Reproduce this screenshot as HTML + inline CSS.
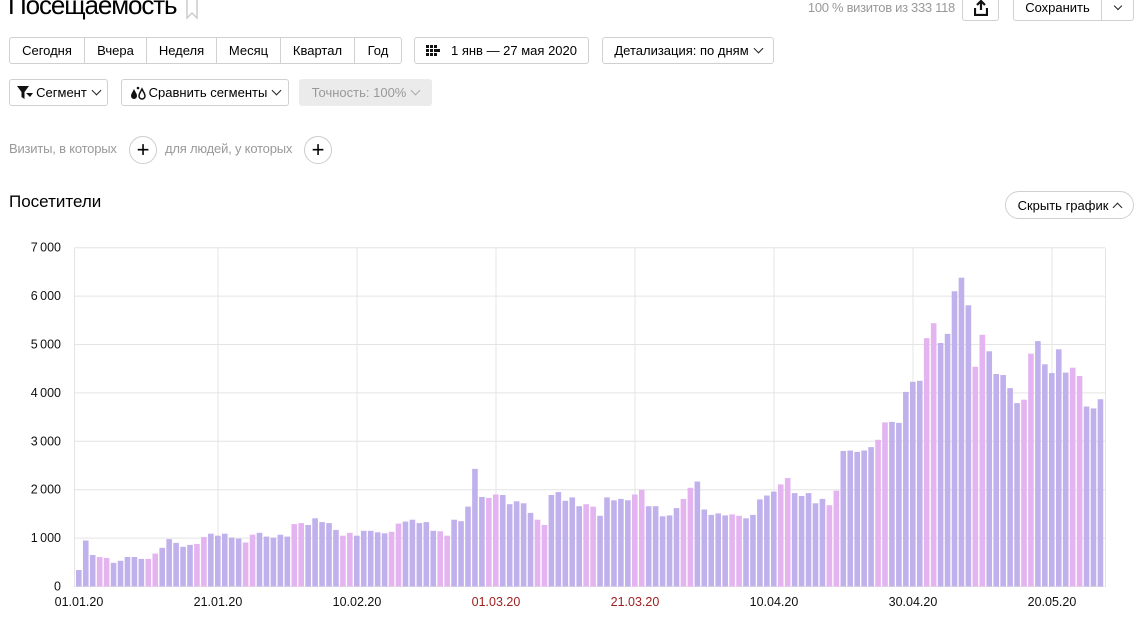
<!DOCTYPE html>
<html><head><meta charset="utf-8">
<style>
*{box-sizing:border-box;margin:0;padding:0}
body{width:1142px;height:619px;overflow:hidden;background:#fff;font-family:"Liberation Sans",Arial,sans-serif;color:#000;position:relative}
.a{position:absolute}
.btn{position:absolute;border:1px solid #d0d0d0;border-radius:3px;background:#fff;font-size:13px;display:flex;align-items:center;justify-content:center;height:27px;white-space:nowrap}
.grp{position:absolute;left:9px;top:37px;height:27px;display:flex;border:1px solid #d0d0d0;border-radius:3px}
.grp div{font-size:13px;display:flex;align-items:center;justify-content:center;border-right:1px solid #d0d0d0;height:100%}
.grp div:last-child{border-right:none}
.chev{display:inline-block;width:7px;height:7px;border-right:1.5px solid #222;border-bottom:1.5px solid #222;transform:rotate(45deg);margin-left:6px;margin-top:-4px}
.plus{position:absolute;width:28px;height:28px;border:1px solid #ccc;border-radius:50%;font-size:22px;line-height:25px;text-align:center}
</style></head><body>
<div class="a" style="left:8px;top:-10px;font-size:26px;letter-spacing:-1.1px">Посещаемость</div>
<svg class="a" style="left:186px;top:0" width="12" height="20"><path d="M1 0V18L6 13L11 18V0" fill="none" stroke="#ccc" stroke-width="1.5"/></svg>
<div class="a" style="right:187px;top:0;font-size:13px;color:#999;letter-spacing:-0.3px">100 % визитов из 333 118</div>
<div class="btn" style="left:962px;top:-6px;width:37px;height:27px"><svg width="14" height="16"><path d="M7 1V10M3 5L7 1L11 5M1 8V15H13V8" fill="none" stroke="#111" stroke-width="2.2"/></svg></div>
<div class="btn" style="left:1013px;top:-6px;width:89px;height:27px;border-radius:3px 0 0 3px">Сохранить</div>
<div class="btn" style="left:1101px;top:-6px;width:33px;height:27px;border-radius:0 3px 3px 0"><span class="chev" style="margin-left:0;width:6px;height:6px"></span></div>

<div class="grp">
<div style="width:75px">Сегодня</div><div style="width:62px">Вчера</div><div style="width:70px">Неделя</div><div style="width:64px">Месяц</div><div style="width:74px">Квартал</div><div style="width:46px">Год</div>
</div>
<div class="btn" style="left:414px;top:37px;width:175px"><svg width="14" height="11" style="margin-right:11px"><g fill="#111"><rect x="0" y="0" width="3" height="3"/><rect x="4" y="0" width="3" height="3"/><rect x="8" y="0" width="3" height="3"/><rect x="0" y="4" width="3" height="3"/><rect x="4" y="4" width="3" height="3"/><rect x="8" y="4" width="3" height="3"/><rect x="11" y="4" width="3" height="3"/><rect x="0" y="8" width="3" height="3"/><rect x="4" y="8" width="3" height="3"/><rect x="8" y="8" width="3" height="3"/></g></svg>1 янв — 27 мая 2020</div>
<div class="btn" style="left:602px;top:37px;width:172px">Детализация: по дням<span class="chev"></span></div>

<div class="btn" style="left:9px;top:79px;width:99px"><svg width="16" height="13" style="margin-right:3px"><path d="M0 0H12L7.5 6V13L4.5 11V6Z M9 7H16L13 11Z" fill="#111"/></svg>Сегмент<span class="chev"></span></div>
<div class="btn" style="left:121px;top:79px;width:168px"><svg width="16" height="14" style="margin-right:3px"><path d="M4 3C2 7 1 8 1 10A3 3 0 0 0 7 10C7 8 6 7 4 3Z" fill="#111"/><path d="M12 3C10 7 9 8 9 10A3 3 0 0 0 15 10C15 8 14 7 12 3Z" fill="none" stroke="#111" stroke-width="1.5"/><circle cx="8" cy="2" r="1.3" fill="#111"/></svg>Сравнить сегменты<span class="chev"></span></div>
<div class="btn" style="left:299px;top:79px;width:133px;background:#ebebeb;border-color:#ebebeb;color:#999">Точность: 100%<span class="chev" style="border-color:#aaa"></span></div>

<div class="a" style="left:9px;top:141px;font-size:13px;color:#999;letter-spacing:-0.2px">Визиты, в которых</div>
<div class="plus" style="left:129px;top:136px">+</div>
<div class="a" style="left:165px;top:141px;font-size:13px;color:#999;letter-spacing:-0.2px">для людей, у которых</div>
<div class="plus" style="left:304px;top:136px">+</div>

<div class="a" style="left:9px;top:192px;font-size:17px">Посетители</div>
<div class="btn" style="left:1005px;top:191px;width:129px;height:28px;border-radius:14px">Скрыть график<span class="chev" style="transform:rotate(225deg);margin-top:4px"></span></div>

<svg id="ch" class="a" style="left:0;top:230px" width="1142" height="389"></svg>
<script>
var v=[340,950,650,610,590,490,530,610,610,570,570,680,800,980,900,820,860,880,1020,1090,1050,1090,1010,990,910,1070,1110,1030,1010,1070,1030,
1290,1310,1270,1410,1330,1310,1170,1050,1110,1050,1150,1150,1120,1100,1130,1300,1340,1380,1310,1330,1150,1140,1050,1380,1350,1650,2430,1850,1830,
1900,1890,1700,1760,1720,1520,1380,1270,1890,1950,1770,1840,1660,1700,1650,1460,1840,1780,1810,1780,1900,2000,1660,1660,1450,1470,1620,1810,2040,2170,1590,
1480,1510,1470,1490,1460,1410,1480,1800,1880,1960,2110,2240,1930,1870,1930,1720,1810,1680,1980,2800,2810,2780,2810,2880,3030,3390,3400,3380,4020,4230,
4250,5130,5440,5030,5220,6100,6380,5810,4540,5200,4860,4390,4370,4100,3790,3860,4810,5070,4590,4410,4900,4420,4520,4350,3720,3680,3870];
var s='',Y0=356.5,k=0.0484;
for(var g=0;g<=7;g++){var y=Y0-g*1000*k;s+='<line x1="74" x2="1105" y1="'+y+'" y2="'+y+'" stroke="#e4e4e4"/>';
s+='<text x="61" y="'+(y+4)+'" font-size="12.5" text-anchor="end" font-family="Liberation Sans" fill="#111">'+(g?g+'\u2009000':'0')+'</text>';}
s+='<line x1="74.5" x2="74.5" y1="18" y2="357" stroke="#e4e4e4"/><line x1="1105.5" x2="1105.5" y1="18" y2="357" stroke="#e4e4e4"/>';
var L=[[0,'01.01.20'],[20,'21.01.20'],[40,'10.02.20'],[60,'01.03.20',1],[80,'21.03.20',1],[100,'10.04.20'],[120,'30.04.20'],[140,'20.05.20']];
L.forEach(function(l){var x=79+l[0]*6.95;if(l[0])s+='<line x1="'+x+'" x2="'+x+'" y1="18" y2="357" stroke="#e4e4e4"/>';
s+='<text x="'+x+'" y="376" font-size="12.5" text-anchor="middle" font-family="Liberation Sans" fill="'+(l[2]?'#a02020':'#111')+'">'+l[1]+'</text>';});
for(var i=0;i<v.length;i++){var h=v[i]*k,x=76+i*6.95,w=(i%7==3||i%7==4);
s+='<rect x="'+x.toFixed(2)+'" y="'+(Y0-h).toFixed(1)+'" width="5.6" height="'+h.toFixed(1)+'" fill="'+(w?'#e3b4f0':'#c0b1ec')+'"/>';}
document.getElementById('ch').innerHTML=s;
</script>
</body></html>
